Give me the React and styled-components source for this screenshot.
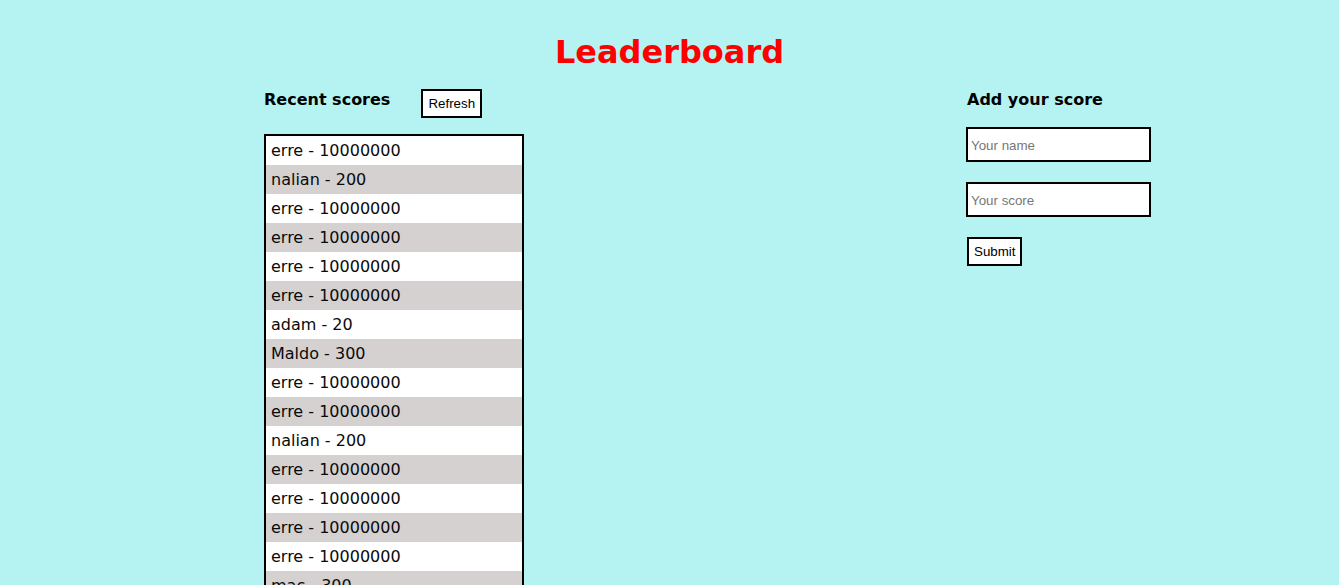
import React from "react";
import styled, { createGlobalStyle } from "styled-components";

const GlobalStyle = createGlobalStyle`
  body {
    margin: 0;
    background-color: #b5f3f3;
    font-family: "DejaVu Sans", Verdana, sans-serif;
  }
`;

const Page = styled.div`
  display: flex;
  flex-direction: column;
  align-items: stretch;
  min-height: 585px;
`;

const Title = styled.h1`
  margin: 33px 0 0;
  text-align: center;
  color: #ff0000;
  font-size: 32px;
  font-weight: bold;
`;

const Columns = styled.div`
  display: flex;
  flex-direction: row;
  align-items: flex-start;
  padding-left: 264px;
  gap: 442px;
  margin-top: 19px;
`;

const LeftColumn = styled.div`
  display: flex;
  flex-direction: column;
  width: 260px;
`;

const RightColumn = styled.div`
  display: flex;
  flex-direction: column;
  align-items: flex-start;
`;

const HeaderRow = styled.div`
  display: flex;
  flex-direction: row;
  align-items: flex-start;
  gap: 31px;
`;

const H4 = styled.h4`
  margin: 0;
  margin-left: ${(props) => props.indent || "0"};
  font-size: 16px;
  font-weight: bold;
  color: black;
`;

const Button = styled.button`
  font-family: "Liberation Sans", Arial, sans-serif;
  font-size: 13.33px;
  color: black;
  background-color: white;
  border: 2px solid black;
  padding: 5px 5px;
  margin: ${(props) => props.m || "0"};
  cursor: pointer;
`;

const ScoreList = styled.ul`
  list-style: none;
  margin: 16px 0 0;
  padding: 0;
  border: 2px solid black;
  background-color: white;
`;

const ScoreRow = styled.li`
  box-sizing: border-box;
  height: 29px;
  padding: 1px 0 0 5px;
  line-height: 28px;
  font-size: 16px;
  color: #0a0a0a;
  background-color: ${(props) => (props.odd ? "#d5d1d1" : "white")};
`;

const Input = styled.input`
  box-sizing: border-box;
  width: 185px;
  height: 35px;
  padding: 1px 3px 0;
  margin-bottom: 20px;
  border: 2px solid black;
  background-color: white;
  font-family: "Liberation Sans", Arial, sans-serif;
  font-size: 13.33px;
  &::placeholder {
    color: #777;
  }
`;

const Form = styled.form`
  display: flex;
  flex-direction: column;
  align-items: flex-start;
  margin-top: 18px;
`;

const scores = [
  "erre - 10000000",
  "nalian - 200",
  "erre - 10000000",
  "erre - 10000000",
  "erre - 10000000",
  "erre - 10000000",
  "adam - 20",
  "Maldo - 300",
  "erre - 10000000",
  "erre - 10000000",
  "nalian - 200",
  "erre - 10000000",
  "erre - 10000000",
  "erre - 10000000",
  "erre - 10000000",
  "mac - 300",
  "erre - 10000000",
  "nalian - 200",
];

const App = () => {
  return (
    <Page>
      <GlobalStyle />
      <Title>Leaderboard</Title>
      <Columns>
        <LeftColumn>
          <HeaderRow>
            <H4>Recent scores</H4>
            <Button type="button" m="-1px 0 0">
              Refresh
            </Button>
          </HeaderRow>
          <ScoreList>
            {scores.map((s, i) => (
              <ScoreRow key={i} odd={i % 2 === 1}>
                {s}
              </ScoreRow>
            ))}
          </ScoreList>
        </LeftColumn>
        <RightColumn>
          <H4 indent="1px">Add your score</H4>
          <Form onSubmit={(e) => e.preventDefault()}>
            <Input type="text" placeholder="Your name" />
            <Input type="number" placeholder="Your score" />
            <Button type="submit" m="0 0 0 1px">
              Submit
            </Button>
          </Form>
        </RightColumn>
      </Columns>
    </Page>
  );
};

export default App;
